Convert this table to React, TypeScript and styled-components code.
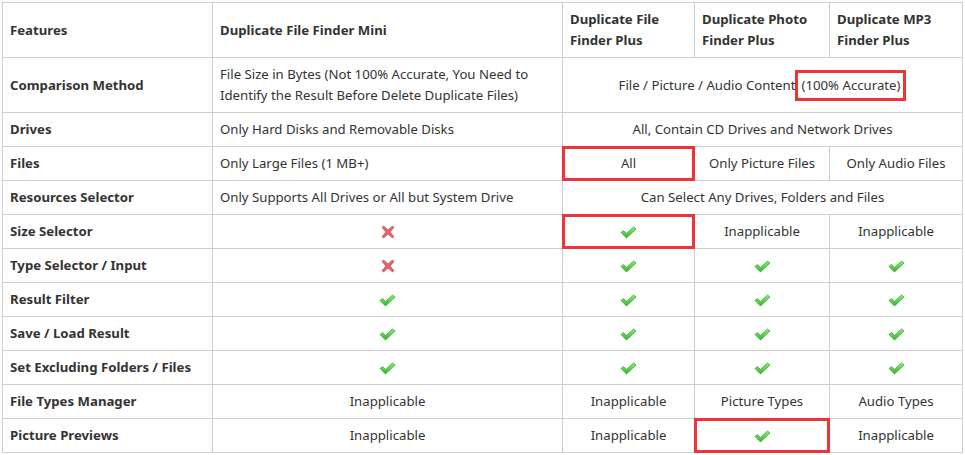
import React from "react";
import styled, { createGlobalStyle } from "styled-components";

const Global = createGlobalStyle`
  html, body { margin: 0; padding: 0; background: #fff; }
  body { font-family: "Noto Sans", "DejaVu Sans", sans-serif; }
`;

const Page = styled.div`
  padding: 2px;
`;

const Table = styled.table`
  border-collapse: collapse;
  table-layout: fixed;
  width: 961px;
  font-size: 13.2px;
  color: #333;
`;

const Th = styled.th`
  border: 1px solid #cfcfcf;
  padding: 6px 7px;
  text-align: left;
  font-weight: bold;
  line-height: 21px;
  height: 42px;
  vertical-align: middle;
`;

const Td = styled.td<{ $center?: boolean; $bold?: boolean; $marked?: boolean }>`
  border: 1px solid #cfcfcf;
  padding: 6px 7px;
  line-height: 21px;
  text-align: ${(p) => (p.$center ? "center" : "left")};
  font-weight: ${(p) => (p.$bold ? "bold" : "normal")};
  vertical-align: middle;
  position: relative;
  ${(p) =>
    p.$marked
      ? `&::after {
    content: "";
    position: absolute;
    inset: -1px;
    border: 3px solid #ee3535;
    pointer-events: none;
  }`
      : ""}
`;

const Mark = styled.span`
  display: inline-block;
  border: 3px solid #ee3535;
  padding: 2px 3px 3px;
  line-height: 20px;
`;

const IconWrap = styled.span`
  display: inline-block;
  vertical-align: middle;
  line-height: 0;
`;

const Check = () => (
  <IconWrap>
    <svg width="17" height="13" viewBox="0 0 17 13">
      <defs>
        <linearGradient id="cg" x1="0" y1="0" x2="0" y2="1">
          <stop offset="0" stopColor="#8ef07a" />
          <stop offset="1" stopColor="#2fb52a" />
        </linearGradient>
      </defs>
      <path
        d="M1 6.5 L3.5 4.5 L6.5 7.5 L13.5 1 L16 3 L6.5 12 Z"
        fill="url(#cg)"
        stroke="#3aa832"
        strokeWidth="0.8"
        strokeLinejoin="round"
      />
    </svg>
  </IconWrap>
);

const Cross = () => (
  <IconWrap>
    <svg width="14" height="14" viewBox="0 0 14 14">
      <path
        d="M2.5 1 L7 5 L11.5 1 L13 2.5 L9 7 L13 11.5 L11.5 13 L7 9 L2.5 13 L1 11.5 L5 7 L1 2.5 Z"
        fill="#e36468"
        stroke="#d0545a"
        strokeWidth="0.8"
        strokeLinejoin="round"
      />
    </svg>
  </IconWrap>
);

type Cell = { c: React.ReactNode; span?: number; marked?: boolean };
type Row = { name: string; mini: React.ReactNode; miniCenter?: boolean; rest: Cell[] };

const Y = <Check />;
const N = <Cross />;

const rows: Row[] = [
  {
    name: "Comparison Method",
    mini: (
      <>
        File Size in Bytes (Not 100% Accurate, You Need to
        <br />
        Identify the Result Before Delete Duplicate Files)
      </>
    ),
    rest: [
      {
        c: (
          <>
            File / Picture / Audio Content<Mark>(100% Accurate)</Mark>
          </>
        ),
        span: 3,
      },
    ],
  },
  {
    name: "Drives",
    mini: "Only Hard Disks and Removable Disks",
    rest: [{ c: "All, Contain CD Drives and Network Drives", span: 3 }],
  },
  {
    name: "Files",
    mini: "Only Large Files (1 MB+)",
    rest: [{ c: "All", marked: true }, { c: "Only Picture Files" }, { c: "Only Audio Files" }],
  },
  {
    name: "Resources Selector",
    mini: "Only Supports All Drives or All but System Drive",
    rest: [{ c: "Can Select Any Drives, Folders and Files", span: 3 }],
  },
  {
    name: "Size Selector",
    mini: N,
    miniCenter: true,
    rest: [{ c: Y, marked: true }, { c: "Inapplicable" }, { c: "Inapplicable" }],
  },
  { name: "Type Selector / Input", mini: N, miniCenter: true, rest: [{ c: Y }, { c: Y }, { c: Y }] },
  { name: "Result Filter", mini: Y, miniCenter: true, rest: [{ c: Y }, { c: Y }, { c: Y }] },
  { name: "Save / Load Result", mini: Y, miniCenter: true, rest: [{ c: Y }, { c: Y }, { c: Y }] },
  { name: "Set Excluding Folders / Files", mini: Y, miniCenter: true, rest: [{ c: Y }, { c: Y }, { c: Y }] },
  {
    name: "File Types Manager",
    mini: "Inapplicable",
    miniCenter: true,
    rest: [{ c: "Inapplicable" }, { c: "Picture Types" }, { c: "Audio Types" }],
  },
  {
    name: "Picture Previews",
    mini: "Inapplicable",
    miniCenter: true,
    rest: [{ c: "Inapplicable" }, { c: Y, marked: true }, { c: "Inapplicable" }],
  },
];

export default function App() {
  return (
    <Page>
      <Global />
      <Table>
        <colgroup>
          <col style={{ width: 210 }} />
          <col style={{ width: 350 }} />
          <col style={{ width: 132 }} />
          <col style={{ width: 135 }} />
          <col style={{ width: 133 }} />
        </colgroup>
        <thead>
          <tr>
            <Th>Features</Th>
            <Th>Duplicate File Finder Mini</Th>
            <Th>
              Duplicate File
              <br />
              Finder Plus
            </Th>
            <Th>
              Duplicate Photo
              <br />
              Finder Plus
            </Th>
            <Th>
              Duplicate MP3
              <br />
              Finder Plus
            </Th>
          </tr>
        </thead>
        <tbody>
          {rows.map((r) => (
            <tr key={r.name}>
              <Td $bold>{r.name}</Td>
              <Td $center={r.miniCenter}>{r.mini}</Td>
              {r.rest.map((cell, i) => (
                <Td key={i} colSpan={cell.span} $center $marked={cell.marked}>
                  {cell.c}
                </Td>
              ))}
            </tr>
          ))}
        </tbody>
      </Table>
    </Page>
  );
}
